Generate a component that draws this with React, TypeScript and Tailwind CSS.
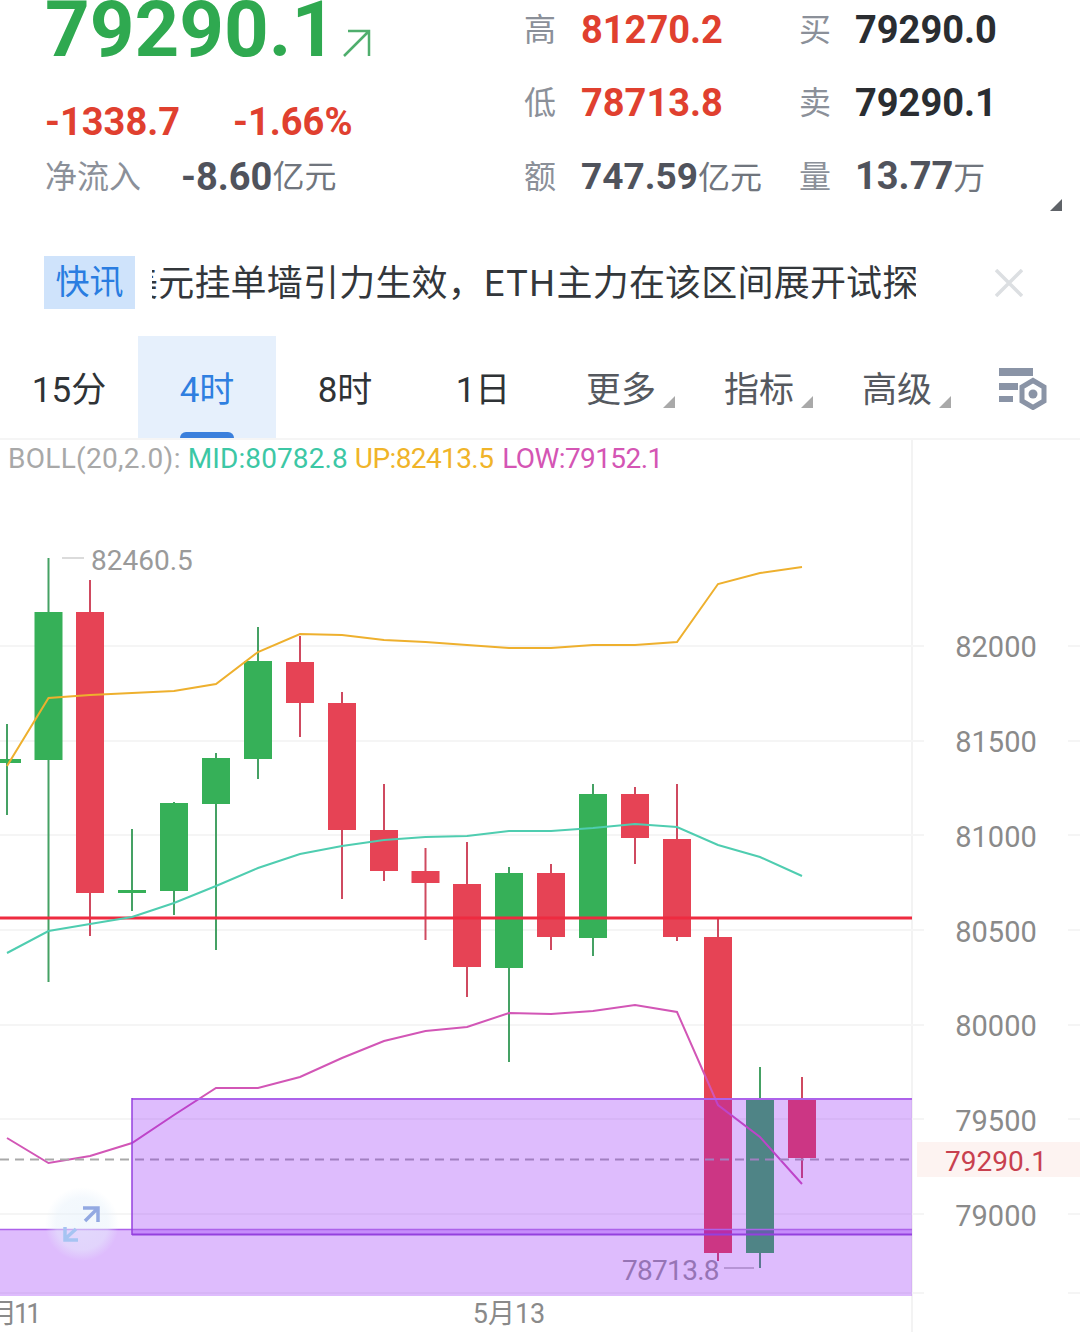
import React from 'react';

type Candle = { x: number; open: number; close: number; high: number; low: number; up: boolean };

const candles: Candle[] = [
  { x: 7, open: 759, close: 763, high: 724, low: 815, up: true },
  { x: 48.5, open: 612, close: 760, high: 558, low: 982, up: true },
  { x: 90, open: 612, close: 893, high: 580, low: 936, up: false },
  { x: 132, open: 890, close: 893, high: 829, low: 911, up: true },
  { x: 174, open: 803, close: 891, high: 802, low: 915, up: true },
  { x: 216, open: 758, close: 804, high: 753, low: 950, up: true },
  { x: 258, open: 661, close: 759, high: 627, low: 779, up: true },
  { x: 300, open: 662, close: 703, high: 636, low: 737, up: false },
  { x: 342, open: 703, close: 830, high: 692, low: 899, up: false },
  { x: 384, open: 830, close: 871, high: 784, low: 881, up: false },
  { x: 425.5, open: 871, close: 883, high: 848, low: 940, up: false },
  { x: 467, open: 884, close: 967, high: 842, low: 997, up: false },
  { x: 509, open: 873, close: 968, high: 867, low: 1062, up: true },
  { x: 551, open: 873, close: 937, high: 864, low: 950, up: false },
  { x: 593, open: 794, close: 938, high: 784, low: 956, up: true },
  { x: 635, open: 794, close: 838, high: 787, low: 864, up: false },
  { x: 677, open: 839, close: 937, high: 784, low: 941, up: false },
  { x: 718, open: 937, close: 1253, high: 918, low: 1261, up: false },
  { x: 760, open: 1099, close: 1253, high: 1067, low: 1268, up: true },
  { x: 802, open: 1099, close: 1158, high: 1077, low: 1178, up: false },
];

const upLine = '7,766 48.5,698 90,695 132,693 174,691 216,684 258,652 300,634 342,635 384,640 425.5,642 467,645 509,648 551,648 593,645 635,645 677,642 718,584 760,573 802,567';
const midLine = '7,953 48.5,931 90,924 132,917 174,903 216,886 258,868 300,854 342,846 384,840 425.5,837 467,836 509,831 551,831 593,828 635,824 677,827 718,845 760,857 802,876';
const lowLine = '7,1138 48.5,1163 90,1156 132,1143 174,1115 216,1088 258,1088 300,1077 342,1058 384,1041 425.5,1031 467,1027 509,1013 551,1014 593,1011 635,1005 677,1012 718,1105 760,1137 802,1184';

const gridYs = [646, 741, 835, 930, 1025, 1119, 1214, 1293];
const axis = [
  { y: 646, label: '82000' },
  { y: 741, label: '81500' },
  { y: 836, label: '81000' },
  { y: 931, label: '80500' },
  { y: 1025, label: '80000' },
  { y: 1120, label: '79500' },
  { y: 1215, label: '79000' },
];

const stats = [
  { rowClass: 'mt-[10px]', a: '高', b: '81270.2', bClass: 'text-[#e0402f]', c: '买', d: '79290.0', dClass: 'text-[#2a2d31]' },
  { rowClass: 'mt-[33px]', a: '低', b: '78713.8', bClass: 'text-[#e0402f]', c: '卖', d: '79290.1', dClass: 'text-[#2a2d31]' },
];

const tabs = ['15分', '4时', '8时', '1日'];
const menus = ['更多', '指标', '高级'];

const Corner = ({ className }: { className: string }) => (
  <svg viewBox="0 0 12 12" className={className}>
    <path d="M12 0V12H0Z" fill="currentColor" />
  </svg>
);

const ChartSvg = () => (
  <svg viewBox="0 440 1080 892" className="block w-[1080px] h-[892px]">
    <defs>
      <radialGradient id="fabGlow">
        <stop offset="0%" stopColor="#e6f1fb" stopOpacity="0.55" />
        <stop offset="70%" stopColor="#e6f1fb" stopOpacity="0.45" />
        <stop offset="100%" stopColor="#e6f1fb" stopOpacity="0" />
      </radialGradient>
    </defs>
    <line x1="912" y1="440" x2="912" y2="1332" stroke="#f3f3f3" strokeWidth="2" />
    {gridYs.map((y) => (
      <g key={y} stroke="#f5f5f5" strokeWidth="2">
        <line x1="0" y1={y} x2="924" y2={y} />
        <line x1="1068" y1={y} x2="1080" y2={y} />
      </g>
    ))}

    {candles.map((c) => (
      <g key={c.x}>
        <line x1={c.x} y1={c.high} x2={c.x} y2={c.low} stroke={c.up ? '#45a164' : '#cf4a60'} strokeWidth="2" />
        <rect x={c.x - 14} y={c.open} width="28" height={c.close - c.open} fill={c.up ? '#36b058' : '#e64355'} />
      </g>
    ))}

    <text x="622" y="1280" fontSize="28" fill="#9a9a9a" letterSpacing="-0.7">78713.8</text>
    <line x1="724" y1="1268" x2="754" y2="1268" stroke="#b5b5b5" strokeWidth="1.5" />

    <line x1="0" y1="918" x2="912" y2="918" stroke="#ee2b40" strokeWidth="3" />

    <polyline points={upLine} fill="none" stroke="#eeb02e" strokeWidth="2" />
    <polyline points={midLine} fill="none" stroke="#4fcdb0" strokeWidth="2" />
    <polyline points={lowLine} fill="none" stroke="#d256b6" strokeWidth="2" />

    <line x1="0" y1="1159.5" x2="912" y2="1159.5" stroke="#a9a9a9" strokeWidth="2" strokeDasharray="9 6" />

    <rect x="132" y="1099" width="780" height="136" fill="#8f18f8" fillOpacity="0.29" />
    <rect x="0" y="1229" width="912" height="67" fill="#8f18f8" fillOpacity="0.29" />
    <line x1="132" y1="1099" x2="912" y2="1099" stroke="#ad62ea" strokeWidth="2" />
    <line x1="0" y1="1229.5" x2="912" y2="1229.5" stroke="#ad62ea" strokeWidth="1.5" />
    <line x1="132" y1="1234.5" x2="912" y2="1234.5" stroke="#9440de" strokeWidth="2" />
    <line x1="132" y1="1098" x2="132" y2="1235" stroke="#9440de" strokeWidth="1.5" />

    <circle cx="82" cy="1224" r="37" fill="url(#fabGlow)" />
    <g fill="none" strokeWidth="3.5">
      <path d="M85 1221L97 1209M83 1208H98V1222" stroke="#93a9e2" />
      <path d="M76 1229L65 1239M65 1227V1240H78" stroke="#a6c4f2" />
    </g>

    <line x1="62" y1="558" x2="84" y2="558" stroke="#cfcfcf" strokeWidth="1.5" />
    <text x="91" y="570" fontSize="28" fill="#9a9a9a">82460.5</text>

    <rect x="917" y="1142" width="163" height="35" fill="#fdf3f1" />
    {axis.map((a) => (
      <text key={a.y} x="996" y={a.y + 11} fontSize="29" fill="#8a8a8a" textAnchor="middle">{a.label}</text>
    ))}
    <text x="996" y="1171" fontSize="28" fill="#c8404e" textAnchor="middle">79290.1</text>

    <text x="-10" y="1323" fontSize="27" fill="#8a8a8a" letterSpacing="-3">月11</text>
    <text x="509" y="1323" fontSize="27" fill="#8a8a8a" textAnchor="middle">5月13</text>
  </svg>
);

export default function App() {
  return (
    <div className="w-[1080px] h-[1332px] overflow-hidden bg-white font-[Roboto,'Noto_Sans_CJK_SC',sans-serif]">
      {/* quote header */}
      <div className="flex h-[240px]">
        <div className="w-[524px] pl-[45px]">
          <div className="flex items-end h-[60px]">
            <span className="mt-[2px] text-[78px] leading-[60px] font-bold text-[#2fa950]">79290.1</span>
            <svg viewBox="0 0 28 28" className="w-[28px] h-[28px] ml-[7px] mb-[3px] text-[#4fae6d]">
              <path d="M1 27L26 2M5 2H26V27" fill="none" stroke="currentColor" strokeWidth="2.5" />
            </svg>
          </div>
          <div className="flex mt-[41px] h-[42px] items-center text-[38px] leading-[42px] font-bold text-[#e0402f]">
            <span className="w-[188px]">-1338.7</span>
            <span>-1.66%</span>
          </div>
          <div className="flex mt-[14px] h-[40px] items-center">
            <span className="w-[136px] text-[32px] text-[#8b9099]">净流入</span>
            <span className="text-[38px] font-bold text-[#50535c]">-8.60</span>
            <span className="text-[32px] text-[#70757d]">亿元</span>
          </div>
        </div>
        <div className="relative flex-1 leading-[40px]">
          {stats.map((s) => (
            <div key={s.a} className={`grid grid-cols-[57px_218px_56px_1fr] h-[40px] items-center ${s.rowClass}`}>
              <span className="text-[32px] text-[#8b9099]">{s.a}</span>
              <span className={`text-[38px] font-bold ${s.bClass}`}>{s.b}</span>
              <span className="text-[32px] text-[#8b9099]">{s.c}</span>
              <span className={`text-[38px] font-bold ${s.dClass}`}>{s.d}</span>
            </div>
          ))}
          <div className="grid grid-cols-[57px_218px_56px_1fr] h-[40px] items-center mt-[33px]">
            <span className="text-[32px] text-[#8b9099]">额</span>
            <span className="text-[37px] font-bold text-[#50535c]">747.59<span className="text-[32px] font-normal text-[#70757d]">亿元</span></span>
            <span className="text-[32px] text-[#8b9099]">量</span>
            <span className="text-[38px] font-bold text-[#50535c]">13.77<span className="text-[32px] font-normal text-[#70757d]">万</span></span>
          </div>
          <Corner className="absolute left-[526px] top-[199px] w-[12px] h-[12px] text-[#5f6368]" />
        </div>
      </div>

      {/* news ticker */}
      <div className="flex items-start h-[96px] pl-[44px] pt-[16px]">
        <div className="w-[91px] h-[53px] flex items-center justify-center bg-[#cfe3fb] text-[34px] text-[#2a7de1]">快讯</div>
        <div className="w-[764px] ml-[17px] mt-[2px] overflow-hidden whitespace-nowrap text-[36px] leading-[53px] text-[#33373b]">
          <span className="inline-block -ml-[30px] tracking-[0.2px]">美元挂单墙引力生效，<span className="tracking-[1.5px]">ETH</span>主力在该区间展开试探</span>
        </div>
        <svg viewBox="0 0 28 28" className="w-[28px] h-[28px] ml-[79px] mt-[13px] text-[#dcdfe2]">
          <path d="M1 1L27 27M27 1L1 27" fill="none" stroke="currentColor" strokeWidth="3.5" />
        </svg>
      </div>

      {/* period tabs */}
      <div className="flex h-[104px] border-b-2 border-[#f5f5f5]">
        {tabs.map((t) => (
          <div
            key={t}
            className={`relative w-[138px] pt-[9px] flex items-center justify-center text-[35px] ${t === '4时' ? 'bg-[#e6f0fc] text-[#2f7fe0]' : 'text-[#2f3336]'}`}
          >
            {t}
            {t === '4时' && <div className="absolute bottom-0 left-[42px] w-[54px] h-[6px] rounded-t-[6px] bg-[#3a7fdc]" />}
          </div>
        ))}
        {menus.map((m) => (
          <div key={m} className="relative w-[138px] pt-[9px] flex items-center justify-center text-[35px] text-[#55595f]">
            {m}
            <Corner className="absolute left-[111px] top-[60px] w-[12px] h-[12px] text-[#a9a9a9]" />
          </div>
        ))}
        <svg viewBox="0 0 48 42" className="w-[48px] h-[42px] ml-[33px] mt-[32px] text-[#8a94a6]">
          <path d="M0 0H34V8H0ZM0 15H19V22H0ZM0 28H14V34H0Z" fill="currentColor" />
          <path d="M34 12.5L45 19V33L34 39.5L23 33V19Z" fill="none" stroke="currentColor" strokeWidth="5" />
          <circle cx="34" cy="26" r="4.5" fill="currentColor" />
        </svg>
      </div>

      {/* kline chart */}
      <div className="relative">
        <ChartSvg />
        <div className="absolute left-[8px] top-[1px] flex text-[28px] leading-[36px] whitespace-nowrap">
          <span className="text-[#a8a8a8] tracking-[0.3px]">BOLL(20,2.0):</span>
          <span className="ml-[7px] text-[#3cc7a5] tracking-[0.1px]">MID:80782.8</span>
          <span className="ml-[7px] text-[#f0b429] tracking-[-0.6px]">UP:82413.5</span>
          <span className="ml-[9px] text-[#d455b4] tracking-[-0.6px]">LOW:79152.1</span>
        </div>
      </div>
    </div>
  );
}
